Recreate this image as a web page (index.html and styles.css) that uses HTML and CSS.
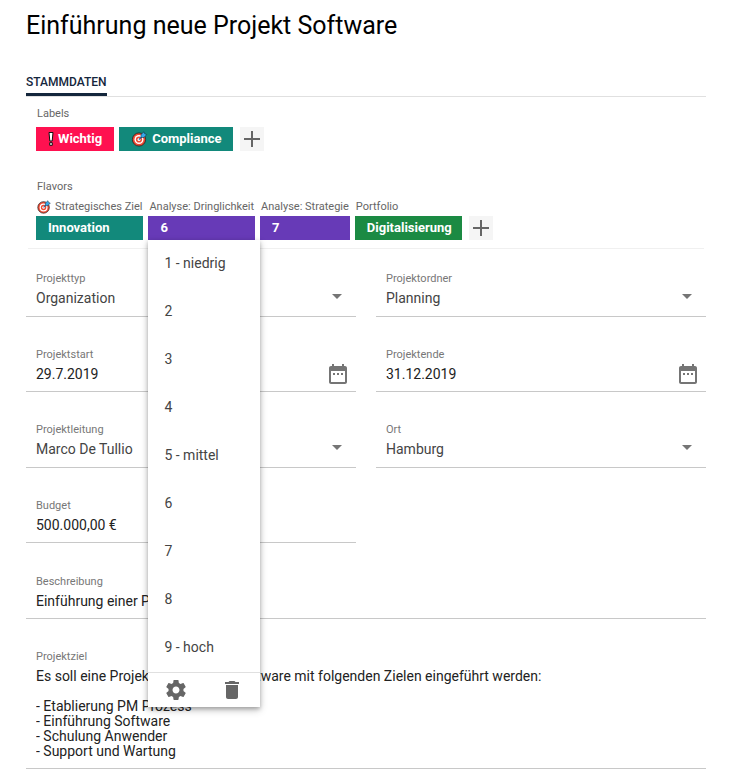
FILE: index.html
```
<!DOCTYPE html>
<html lang="de">
<head>
<meta charset="UTF-8">
<title>Einführung neue Projekt Software</title>
<meta name="viewport" content="width=device-width, initial-scale=1.0">
<link rel="stylesheet" href="styles.css">
</head>
<body>

<!-- shared icons -->
<svg class="defs" width="0" height="0" aria-hidden="true">
  <symbol id="plus" viewBox="0 0 24 24"><path d="M11 4h2v7h7v2h-7v7h-2v-7H4v-2h7z"/></symbol>
  <symbol id="calendar" viewBox="0 0 24 24"><path d="M9 11H7v2h2v-2zm4 0h-2v2h2v-2zm4 0h-2v2h2v-2zm2-7h-1V2h-2v2H8V2H6v2H5c-1.110 0-1.990.9-1.990 2L3 20c0 1.100.890 2 2 2h14c1.100 0 2-.9 2-2V6c0-1.100-.9-2-2-2zm0 16H5V9h14v11z"/></symbol>
  <symbol id="target" viewBox="0 0 16 16">
    <circle cx="7.500" cy="8.500" r="6.600" fill="#ee4a33" stroke="#222" stroke-width=".8"/>
    <circle cx="7.500" cy="8.500" r="4.500" fill="#fff"/>
    <circle cx="7.500" cy="8.500" r="3.100" fill="#ee4a33"/>
    <circle cx="7.500" cy="8.500" r="1.500" fill="#fff"/>
    <path d="M7.500 8.500 11.500 4.500" stroke="#1b6fae" stroke-width="1.300"/>
    <path d="M9.500 6.500V3.500L12.500.8l.7 2 2 .7L12.500 6.500z" fill="#35a9e8" stroke="#123" stroke-width=".5"/>
  </symbol>
</svg>

<main class="page">
<h1 class="title">Einführung neue Projekt Software</h1>

<nav class="tabs"><a class="tab" href="#stammdaten">Stammdaten</a></nav>

<section class="tags" id="stammdaten">
  <div class="caption">Labels</div>
  <div class="chips">
    <button class="chip red"><svg class="mark" width="6" height="16" viewBox="0 0 6 16"><path d="M1 1.500h4L4.200 10H1.800zM1.700 11.700h2.600v2.600H1.700z" fill="#fff" stroke="#111"/></svg>Wichtig</button>
    <button class="chip teal"><svg class="target" width="17" height="16"><use href="#target"/></svg>Compliance</button>
    <button class="add" aria-label="Label hinzufügen"><svg width="24" height="24"><use href="#plus"/></svg></button>
  </div>

  <div class="caption flavors">Flavors</div>
  <div class="chips">
    <div class="flavor">
      <div class="name"><svg class="target" width="14" height="14"><use href="#target"/></svg>Strategisches Ziel</div>
      <button class="chip teal">Innovation</button>
    </div>
    <div class="flavor">
      <div class="name">Analyse: Dringlichkeit</div>
      <button class="chip purple">6</button>
      <div class="menu">
        <button class="item">1 - niedrig</button>
        <button class="item">2</button>
        <button class="item">3</button>
        <button class="item">4</button>
        <button class="item">5 - mittel</button>
        <button class="item">6</button>
        <button class="item">7</button>
        <button class="item">8</button>
        <button class="item">9 - hoch</button>
        <div class="actions">
          <button class="action" aria-label="Einstellungen"><svg width="24" height="24" viewBox="0 0 24 24"><path d="M19.430 12.980c.04-.32.070-.64.070-.98s-.03-.66-.07-.98l2.110-1.650c.19-.15.240-.42.120-.64l-2-3.460c-.12-.22-.39-.3-.61-.22l-2.490 1c-.52-.4-1.080-.73-1.690-.98l-.38-2.650C14.460 2.180 14.250 2 14 2h-4c-.25 0-.46.180-.49.420l-.38 2.650c-.61.250-1.170.590-1.690.980l-2.490-1c-.23-.09-.49 0-.61.220l-2 3.460c-.13.220-.07.490.120.640l2.110 1.650c-.04.320-.07.650-.07.980s.03.660.070.980l-2.110 1.650c-.19.150-.24.420-.12.640l2 3.460c.12.220.390.300.610.220l2.490-1c.52.400 1.080.730 1.690.980l.38 2.650c.03.240.240.420.490.420h4c.25 0 .46-.18.490-.42l.38-2.650c.61-.25 1.170-.59 1.690-.98l2.490 1c.23.090.490 0 .61-.22l2-3.460c.12-.22.070-.49-.12-.64l-2.110-1.650zM12 15.500c-1.930 0-3.500-1.570-3.500-3.500s1.570-3.500 3.500-3.500 3.500 1.570 3.500 3.500-1.570 3.500-3.500 3.500z"/></svg></button>
          <button class="action" aria-label="Löschen"><svg width="24" height="24" viewBox="0 0 24 24"><path d="M6 19c0 1.100.9 2 2 2h8c1.100 0 2-.9 2-2V7H6v12zM19 4h-3.500l-1-1h-5l-1 1H5v2h14V4z"/></svg></button>
        </div>
      </div>
    </div>
    <div class="flavor">
      <div class="name">Analyse: Strategie</div>
      <button class="chip purple">7</button>
    </div>
    <div class="flavor">
      <div class="name">Portfolio</div>
      <button class="chip green">Digitalisierung</button>
    </div>
    <button class="add" aria-label="Flavor hinzufügen"><svg width="24" height="24"><use href="#plus"/></svg></button>
  </div>
</section>

<form class="form">
  <div class="field select">
    <label for="typ">Projekttyp</label>
    <select id="typ"><option>Organization</option></select>
  </div>
  <div class="field select">
    <label for="ordner">Projektordner</label>
    <select id="ordner"><option>Planning</option></select>
  </div>
  <div class="field date">
    <label for="start">Projektstart</label>
    <div class="row"><input id="start" value="29.7.2019"><button type="button" class="pick" aria-label="Datum wählen"><svg width="24" height="24"><use href="#calendar"/></svg></button></div>
  </div>
  <div class="field date">
    <label for="ende">Projektende</label>
    <div class="row"><input id="ende" value="31.12.2019"><button type="button" class="pick" aria-label="Datum wählen"><svg width="24" height="24"><use href="#calendar"/></svg></button></div>
  </div>
  <div class="field select">
    <label for="leitung">Projektleitung</label>
    <select id="leitung"><option>Marco De Tullio</option></select>
  </div>
  <div class="field select">
    <label for="ort">Ort</label>
    <select id="ort"><option>Hamburg</option></select>
  </div>
  <div class="field">
    <label for="budget">Budget</label>
    <input id="budget" value="500.000,00 €">
  </div>
  <div class="field wide text">
    <label for="beschreibung">Beschreibung</label>
    <input id="beschreibung" value="Einführung einer Projektsoftware">
  </div>
  <div class="field wide">
    <label for="ziel">Projektziel</label>
    <textarea id="ziel" rows="6">Es soll eine Projektmanagementsoftware mit folgenden Zielen eingeführt werden:

- Etablierung PM Prozess
- Einführung Software
- Schulung Anwender
- Support und Wartung</textarea>
  </div>
</form>
</main>

</body>
</html>
```
FILE: styles.css
```
* { box-sizing: border-box; }
body {
    margin: 0;
    background-color: #fff;
    font-family: Roboto, Arial, sans-serif;
    color: #000;
}
button, input, select, textarea {
    margin: 0;
    padding: 0;
    border: none;
    background: transparent;
    font-family: inherit;
    color: inherit;
}
svg { display: block; flex: none; fill: currentColor; }
.defs { position: absolute; }
.page { padding: 8px 34px 9px 26px; }
.title {
    margin: 0;
    font-size: 25px;
    line-height: 36px;
    font-weight: 400;
}

/* tabs */
.tabs {
    display: flex;
    margin-top: 28px;
    border-bottom: 1px solid #e0e0e0;
}
.tab {
    border-bottom: 3px solid #14263c;
    font-size: 12px;
    line-height: 21px;
    font-weight: 500;
    text-transform: uppercase;
    text-decoration: none;
    color: #14263c;
}

/* labels and flavors */
.tags {
    margin: 0 2px;
    padding: 9px 8px 8px;
    border-bottom: 1px solid #f0f0f0;
}
.caption, .name {
    font-size: 11px;
    line-height: 16px;
    color: #666;
}
.caption { padding-left: 1px; margin-bottom: 5px; }
.flavors { margin: 28px 0 4px; }
.chips { display: flex; align-items: flex-end; gap: 5px; }
.flavor { position: relative; }
.name {
    display: flex;
    align-items: center;
    gap: 4px;
    margin-bottom: 1px;
    padding: 0 1px;
}
.chip {
    display: flex;
    align-items: center;
    gap: 4px;
    height: 24px;
    padding: 0 12px 1px;
    font-size: 13px;
    font-weight: 700;
    color: #fff;
}
.flavor .chip { width: 100%; padding-right: 10px; }
.red { background-color: #ff1150; }
.teal { background-color: #12897b; }
.purple { background-color: #673ab7; }
.green { background-color: #1b8a43; }
.add {
    width: 24px;
    height: 24px;
    margin-left: 2px;
    background-color: #f5f5f5;
    color: #666;
}

/* dropdown menu */
.menu {
    position: absolute;
    z-index: 1;
    top: 100%;
    left: 0;
    width: 112px;
    background-color: #fff;
    box-shadow: 0 2px 4px rgba(0,0,0,0.25), 0 3px 8px rgba(0,0,0,0.2);
}
.item {
    display: block;
    width: 100%;
    height: 48px;
    padding: 0 16px 2px;
    font-size: 14px;
    text-align: left;
    color: #444;
}
.actions {
    display: flex;
    border-top: 1px solid #e0e0e0;
    color: #666;
}
.action {
    display: flex;
    flex: 1;
    justify-content: center;
    padding: 5px 0;
}

/* form */
.form {
    display: grid;
    grid-template-columns: 1fr 1fr;
    gap: 29px 20px;
    padding-top: 21px;
}
.field {
    padding: 2px 10px 5px;
    border-bottom: 1px solid #c8c8c8;
}
.field label {
    display: block;
    font-size: 11px;
    line-height: 14px;
    color: #777;
}
.field input, .field select {
    display: block;
    width: 100%;
    height: 24px;
    font-size: 14px;
    color: #222;
}
.field.select { padding-bottom: 6px; }
.field.text { padding-top: 3px; }
.field select {
    appearance: none;
    color: #444;
}
.select { position: relative; }
.select::after {
    content: "";
    position: absolute;
    right: 14px;
    bottom: 17px;
    border: 5px solid transparent;
    border-top-color: #757575;
    border-bottom: none;
    pointer-events: none;
}
.wide { grid-column: 1 / -1; }
.field.date { padding-right: 6px; }
.row { display: flex; }
.pick { color: #757575; }
.field textarea {
    display: block;
    width: 100%;
    padding: 5px 0 4px;
    resize: none;
    overflow: hidden;
    font-size: 14px;
    line-height: 15px;
    color: #222;
}
```
